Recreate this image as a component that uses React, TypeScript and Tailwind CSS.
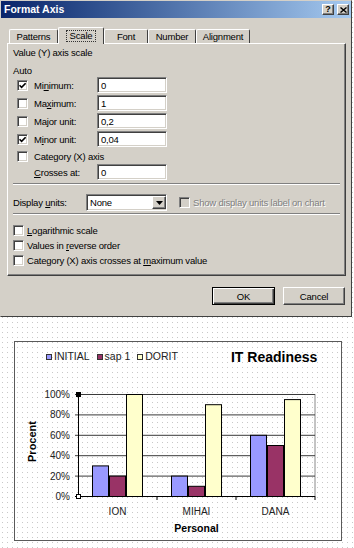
import React from 'react';

// Windows classic bevels
const raised =
  'border border-t-white border-l-white border-r-[#404040] border-b-[#404040] shadow-[inset_-1px_-1px_0_#808080]';
const sunken =
  'border border-t-[#808080] border-l-[#808080] border-r-white border-b-white shadow-[inset_1px_1px_0_#404040,inset_-1px_-1px_0_#d4d0c8]';

const CheckBox = ({ checked = false, disabled = false }: { checked?: boolean; disabled?: boolean }) => (
  <span
    className={`flex h-[11px] w-[11px] shrink-0 items-center justify-center ${sunken} ${
      disabled ? 'bg-[#d4d0c8]' : 'bg-white'
    }`}
  >
    {checked && (
      <svg width="7" height="7" viewBox="0 0 7 7">
        <polyline points="0.5,3.2 2.6,5.4 6.6,1.2" fill="none" stroke="#000" strokeWidth="1.6" />
      </svg>
    )}
  </span>
);

const TextBox = ({ value }: { value: string }) => (
  <div className={`flex h-[16px] w-[70px] items-center bg-white pl-[3px] ${sunken}`}>{value}</div>
);

type RowProps = { label: React.ReactNode; value: string; checked?: boolean };

const ScaleRow = ({ label, value, checked }: RowProps) => (
  <div className="flex h-[16px] items-center">
    <span className="ml-[4px]">
      <CheckBox checked={checked} />
    </span>
    <span className="ml-[6px] w-[63px]">{label}</span>
    <TextBox value={value} />
  </div>
);

const Separator = ({ className = '' }: { className?: string }) => (
  <div className={`h-[2px] border-t border-t-[#808080] border-b border-b-white ${className}`} />
);

const tabs = ['Patterns', 'Scale', 'Font', 'Number', 'Alignment'];
const tabWidths = [49, 46, 44, 48, 54];

const FormatAxisDialog = () => (
  <div className="flex h-[317px] w-[352px] flex-col border border-t-[#d4d0c8] border-l-[#d4d0c8] border-r-[#404040] border-b-[#404040] bg-[#d4d0c8] bg-[radial-gradient(circle,#ffffff_0.6px,transparent_0.7px)] bg-[length:4px_4px] text-[9.5px] leading-[11px] tracking-[-0.2px] text-black">
    {/* Title bar */}
    <div className="flex h-[17px] items-center justify-between bg-linear-to-r from-[#0a246a] to-[#a6caf0] pl-[3px] pr-[2px]">
      <span className="text-[10.5px] font-bold tracking-normal text-white">Format Axis</span>
      <div className="flex gap-[3px]">
        <button className={`flex h-[11px] w-[12px] items-center justify-center bg-[#d4d0c8] text-[9px] font-bold leading-none ${raised}`}>
          ?
        </button>
        <button className={`flex h-[11px] w-[12px] items-center justify-center bg-[#d4d0c8] ${raised}`}>
          <svg width="7" height="6" viewBox="0 0 7 6">
            <path d="M0.5 0.5L6.5 5.5M6.5 0.5L0.5 5.5" stroke="#000" strokeWidth="1.4" />
          </svg>
        </button>
      </div>
    </div>

    {/* Tabs */}
    <div className="mt-[9px] flex h-[16px] items-end pl-[8px]">
      {tabs.map((t, i) => {
        const active = t === 'Scale';
        return (
          <div
            key={t}
            style={{ width: tabWidths[i] }}
            className={`relative flex items-center justify-center rounded-t-[2px] border-t border-l border-t-white border-l-white border-r border-r-[#404040] bg-[#d4d0c8] ${
              active ? 'z-10 -mb-[1px] h-[17px]' : 'h-[14px]'
            }`}
          >
            {active ? (
              <span className="border border-dotted border-[#333] px-[3px] leading-[10px]">{t}</span>
            ) : (
              t
            )}
          </div>
        );
      })}
    </div>

    {/* Panel */}
    <div className="ml-[6px] flex h-[233px] w-[339px] flex-col border border-t-white border-l-white border-r-[#404040] border-b-[#404040] px-[5px] shadow-[inset_-1px_-1px_0_#808080]">
      <div className="mt-[3px]">Value (Y) axis scale</div>
      <div className="mt-[7px]">Auto</div>
      <div className="mt-[1px] flex flex-col gap-[2px]">
        <ScaleRow checked value="0" label={<>Mi<u>n</u>imum:</>} />
        <ScaleRow value="1" label={<>Ma<u>x</u>imum:</>} />
        <ScaleRow value="0,2" label={<>Ma<u>j</u>or unit:</>} />
        <ScaleRow checked value="0,04" label={<>M<u>i</u>nor unit:</>} />
      </div>
      <div className="mt-[1px] flex h-[16px] items-center">
        <span className="ml-[4px]">
          <CheckBox />
        </span>
        <span className="ml-[6px]">Category (X) axis</span>
      </div>
      <div className="flex h-[16px] items-center">
        <span className="ml-[21px] w-[63px]">
          <u>C</u>rosses at:
        </span>
        <TextBox value="0" />
      </div>
      <Separator className="mt-[3px]" />

      <div className="mt-[9px] flex h-[17px] items-center">
        <span className="w-[73px]">
          Display <u>u</u>nits:
        </span>
        <div className={`flex h-[17px] w-[81px] items-center justify-between bg-white pl-[3px] ${sunken}`}>
          <span>None</span>
          <span className={`flex h-[13px] w-[14px] items-center justify-center bg-[#d4d0c8] ${raised}`}>
            <svg width="7" height="4" viewBox="0 0 7 4">
              <path d="M0 0H7L3.5 4Z" fill="#000" />
            </svg>
          </span>
        </div>
        <span className="ml-[12px]">
          <CheckBox disabled />
        </span>
        <span className="ml-[3px] text-[#808080] [text-shadow:1px_1px_0_#fff]">
          Show display units label on chart
        </span>
      </div>
      <Separator className="mt-[2px]" />

      <div className="mt-[8px] flex flex-col">
        {[
          <>
            <u>L</u>ogarithmic scale
          </>,
          <>
            Values in <u>r</u>everse order
          </>,
          <>
            Category (X) axis crosses at <u>m</u>aximum value
          </>,
        ].map((label, i) => (
          <div key={i} className="flex h-[15px] items-center">
            <CheckBox />
            <span className="ml-[3px]">{label}</span>
          </div>
        ))}
      </div>
    </div>

    {/* Buttons */}
    <div className="mt-[11px] flex justify-end gap-[8px] pr-[6px]">
      <button className="flex h-[18px] w-[63px] items-center justify-center border border-black bg-[#d4d0c8] shadow-[inset_1px_1px_0_#fff,inset_-1px_-1px_0_#404040,inset_-2px_-2px_0_#808080]">
        OK
      </button>
      <button className={`flex h-[18px] w-[62px] items-center justify-center bg-[#d4d0c8] ${raised}`}>
        Cancel
      </button>
    </div>
  </div>
);

const series = [
  { name: 'INITIAL', color: '#9999ff' },
  { name: 'sap 1', color: '#993366' },
  { name: 'DORIT', color: '#ffffcc' },
];

const data = [
  { cat: 'ION', values: [30, 20, 100] },
  { cat: 'MIHAI', values: [20, 10, 90] },
  { cat: 'DANA', values: [60, 50, 95] },
];

// plot geometry, page coordinates (svg viewBox is offset to match)
const X0 = 78;
const X1 = 315;
const Y0 = 496;
const Y100 = 394;
const CAT_W = (X1 - X0) / 3;
const yOf = (p: number) => Y0 - ((Y0 - Y100) * p) / 100;

const ReadinessChart = () => (
  <div className="ml-[14px] mt-[24px] flex h-[200px] w-[328px] flex-col border border-[#5a5a5a] font-['Liberation_Sans',Arial,sans-serif]">
    <div className="flex h-[30px] items-center">
      <div className="ml-[31px] flex items-center gap-[7px] text-[10.5px] text-[#222]">
        {series.map((s) => (
          <span key={s.name} className="flex items-center gap-[2px]">
            <span className="h-[6px] w-[6px] border border-[#333]" style={{ background: s.color }} />
            {s.name}
          </span>
        ))}
      </div>
      <span className="ml-[53px] text-[14px] font-bold text-black">IT Readiness</span>
    </div>

    <svg width="326" height="168" viewBox="15 372 326 168" className="block">
      <g fontFamily="'Liberation Sans', Arial, sans-serif" fill="#222">
        {/* plot frame + gridlines */}
        <line x1={X1} y1={Y100} x2={X1} y2={Y0} stroke="#8a8a8a" />
        {[20, 40, 60, 80, 100].map((p) => (
          <line key={p} x1={X0 - 3} y1={yOf(p) + 0.5} x2={X1} y2={yOf(p) + 0.5} stroke="#3a3a3a" />
        ))}
        <line x1={X0 - 3} y1={Y0 + 0.5} x2={X0} y2={Y0 + 0.5} stroke="#000" />

        {/* bars */}
        {data.map((d, ci) =>
          d.values.map((v, si) => {
            const x = X0 + ci * CAT_W + 14 + si * 17;
            return (
              <rect
                key={`${ci}-${si}`}
                x={x + 0.5}
                y={yOf(v) + 0.5}
                width={16}
                height={Y0 - yOf(v)}
                fill={series[si].color}
                stroke="#000"
              />
            );
          })
        )}

        {/* axes */}
        <line x1={X0 + 0.5} y1={Y100} x2={X0 + 0.5} y2={Y0 + 1} stroke="#000" />
        <line x1={X0} y1={Y0 + 0.5} x2={X1} y2={Y0 + 0.5} stroke="#000" />
        {[1, 2, 3].map((i) => (
          <line key={i} x1={X0 + i * CAT_W} y1={Y0} x2={X0 + i * CAT_W} y2={Y0 + 4} stroke="#000" />
        ))}

        {/* selection handles on the value axis */}
        <rect x={X0 - 2} y={Y100 - 2} width="5" height="5" fill="#000" />
        <rect x={X0 - 2} y={Y0 - 2} width="5" height="5" fill="#000" />
        <rect x={X0 - 1} y={Y0 - 1} width="3" height="3" fill="#fff" />

        {/* labels */}
        {[0, 20, 40, 60, 80, 100].map((p) => (
          <text key={p} x={70} y={yOf(p) + 4} fontSize="10" textAnchor="end">
            {p}%
          </text>
        ))}
        {data.map((d, ci) => (
          <text key={d.cat} x={X0 + ci * CAT_W + CAT_W / 2} y={515} fontSize="10" textAnchor="middle">
            {d.cat}
          </text>
        ))}
        <text x={196.5} y={532} fontSize="10.5" fontWeight="bold" textAnchor="middle" fill="#000">
          Personal
        </text>
        <text
          x={35.5}
          y={441.5}
          fontSize="11"
          fontWeight="bold"
          textAnchor="middle"
          fill="#000"
          transform="rotate(-90 35.5 441.5)"
        >
          Procent
        </text>
      </g>
    </svg>
  </div>
);

export default function App() {
  return (
    <div className="h-[548px] w-[354px] overflow-hidden bg-white bg-[radial-gradient(circle,#c8c8c8_0.6px,transparent_0.7px)] bg-[length:5px_5px] font-['Liberation_Sans',Arial,sans-serif]">
      <FormatAxisDialog />
      <ReadinessChart />
    </div>
  );
}
